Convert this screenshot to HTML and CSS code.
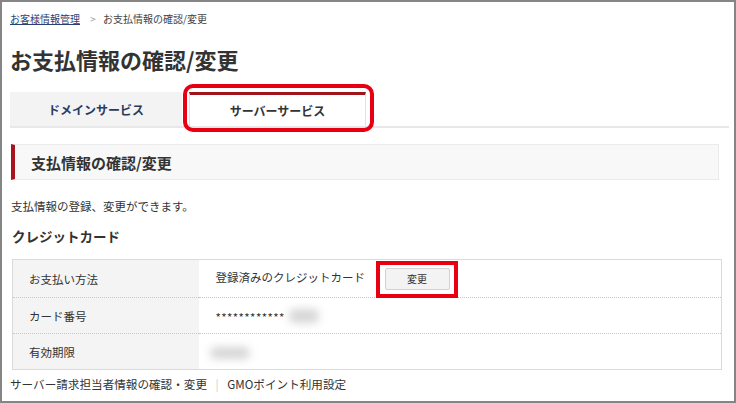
FILE: index.html
```html
<!DOCTYPE html>
<html lang="ja">
<head>
    <meta charset="UTF-8">
    <meta name="viewport" content="width=device-width, initial-scale=1.0">
    <title>お支払情報の確認/変更</title>
    <link rel="stylesheet" href="styles.css">
</head>
<body>
    <div class="frame">
        <nav class="crumbs">
            <a href="#" class="crumbs-link">お客様情報管理</a>
            <span class="crumbs-sep">&gt;</span>
            <span>お支払情報の確認/変更</span>
        </nav>

        <h1 class="page-title">お支払情報の確認/変更</h1>

        <div class="tabs">
            <a href="#" class="tab">ドメインサービス</a>
            <a href="#" class="tab tab-active">サーバーサービス<span class="mark mark-tab"></span></a>
        </div>

        <h2 class="section-head">支払情報の確認/変更</h2>
        <p class="lead">支払情報の登録、変更ができます。</p>

        <h3 class="sub-head">クレジットカード</h3>
        <table class="info">
            <tr>
                <th>お支払い方法</th>
                <td>
                    登録済みのクレジットカード
                    <span class="btn-wrap">
                        <button class="btn">変更</button>
                        <span class="mark mark-btn"></span>
                    </span>
                </td>
            </tr>
            <tr>
                <th>カード番号</th>
                <td><span class="stars">************</span><span class="blur blur-num"></span></td>
            </tr>
            <tr>
                <th>有効期限</th>
                <td><span class="blur blur-date"></span></td>
            </tr>
        </table>

        <div class="links">
            <a href="#">サーバー請求担当者情報の確認・変更</a>
            <span class="links-sep">|</span>
            <a href="#">GMOポイント利用設定</a>
        </div>
    </div>
</body>
</html>
```

FILE: styles.css
```css
body {
    margin: 0;
    padding: 0;
    background-color: #fff;
    font-family: "Noto Sans CJK JP", "Noto Sans", sans-serif;
    color: #333;
}

.frame {
    height: 403px;
    box-sizing: border-box;
    border: 2px solid #858585;
    padding: 0 8px;
    overflow: hidden;
}

/* breadcrumb */
.crumbs {
    font-size: 10px;
    line-height: 14px;
    padding-top: 10px;
    color: #444;
}

.crumbs-link {
    color: #2c3f73;
    text-decoration: underline;
}

.crumbs-sep {
    color: #999;
    margin: 0 5px 0 8px;
}

.page-title {
    font-size: 22px;
    line-height: 28px;
    font-weight: bold;
    margin: 19px 0 0 0;
    color: #333;
}

/* tabs */
.tabs {
    display: flex;
    margin-top: 19px;
    border-bottom: 2px solid #e8e8e8;
    width: 719px;
}

.tab {
    position: relative;
    display: flex;
    align-items: center;
    justify-content: center;
    height: 34px;
    font-size: 12px;
    font-weight: bold;
    text-decoration: none;
    color: #2b3a5c;
    background-color: #f3f3f3;
    width: 172px;
}

.tab-active {
    width: 177px;
    margin-left: 7px;
    background-color: #fff;
    color: #333;
    box-sizing: border-box;
    border-top: 3px solid #a0151c;
    border-left: 1px solid #e2e2e2;
    border-right: 1px solid #e2e2e2;
}

/* red annotation boxes drawn over the screenshot */
.mark {
    position: absolute;
    border: 4px solid #e60012;
    pointer-events: none;
}

.mark-tab {
    left: -7px;
    right: -9px;
    top: -11px;
    bottom: -6px;
    border-radius: 10px;
}

.mark-btn {
    left: -9px;
    right: -8px;
    top: -7px;
    bottom: -8px;
}

/* section */
.section-head {
    margin: 16px 7px 0 1px;
    height: 36px;
    box-sizing: border-box;
    display: flex;
    align-items: center;
    padding-left: 16px;
    font-size: 15px;
    font-weight: bold;
    background-color: #f8f8f8;
    border: 1px solid #ebebeb;
    border-left: 4px solid #a8141c;
}

.lead {
    font-size: 11.5px;
    margin: 18px 0 0 1px;
    line-height: 16px;
}

.sub-head {
    font-size: 13.5px;
    font-weight: bold;
    margin: 12px 0 0 2px;
    line-height: 20px;
}

/* credit card table */
.info {
    margin: 13px 0 0 2px;
    width: 710px;
    border-collapse: collapse;
    border: 1px solid #dadada;
    font-size: 11.5px;
}

.info th {
    width: 186px;
    text-align: left;
    font-weight: normal;
    background-color: #f4f4f4;
    padding: 0 0 0 16px;
    box-sizing: border-box;
}

.info td {
    padding: 0 0 0 17px;
    background-color: #fff;
}

.info tr {
    height: 36px;
    border-top: 1px dotted #c8c8c8;
}

.info tr:first-child {
    height: 38px;
}

.btn-wrap {
    position: relative;
    display: inline-block;
    margin-left: 17px;
    vertical-align: middle;
}

.btn {
    display: block;
    width: 65px;
    height: 22px;
    font-family: inherit;
    font-size: 10px;
    color: #333;
    background-color: #f3f3f3;
    border: 1px solid #d2d2d2;
    border-radius: 2px;
    padding: 0;
}

.stars {
    letter-spacing: 0.4px;
    vertical-align: middle;
}

.blur {
    display: inline-block;
    vertical-align: middle;
    background-color: #d6d6d6;
    filter: blur(4px);
    border-radius: 6px;
}

.blur-num {
    width: 30px;
    height: 14px;
    margin-left: 4px;
}

.blur-date {
    width: 40px;
    height: 12px;
    margin-left: -6px;
}

/* footer links */
.links {
    font-size: 11.6px;
    margin-top: 6px;
    line-height: 16px;
}

.links a {
    color: #333;
    text-decoration: none;
}

.links-sep {
    color: #ccc;
    margin: 0 6px;
}
```
